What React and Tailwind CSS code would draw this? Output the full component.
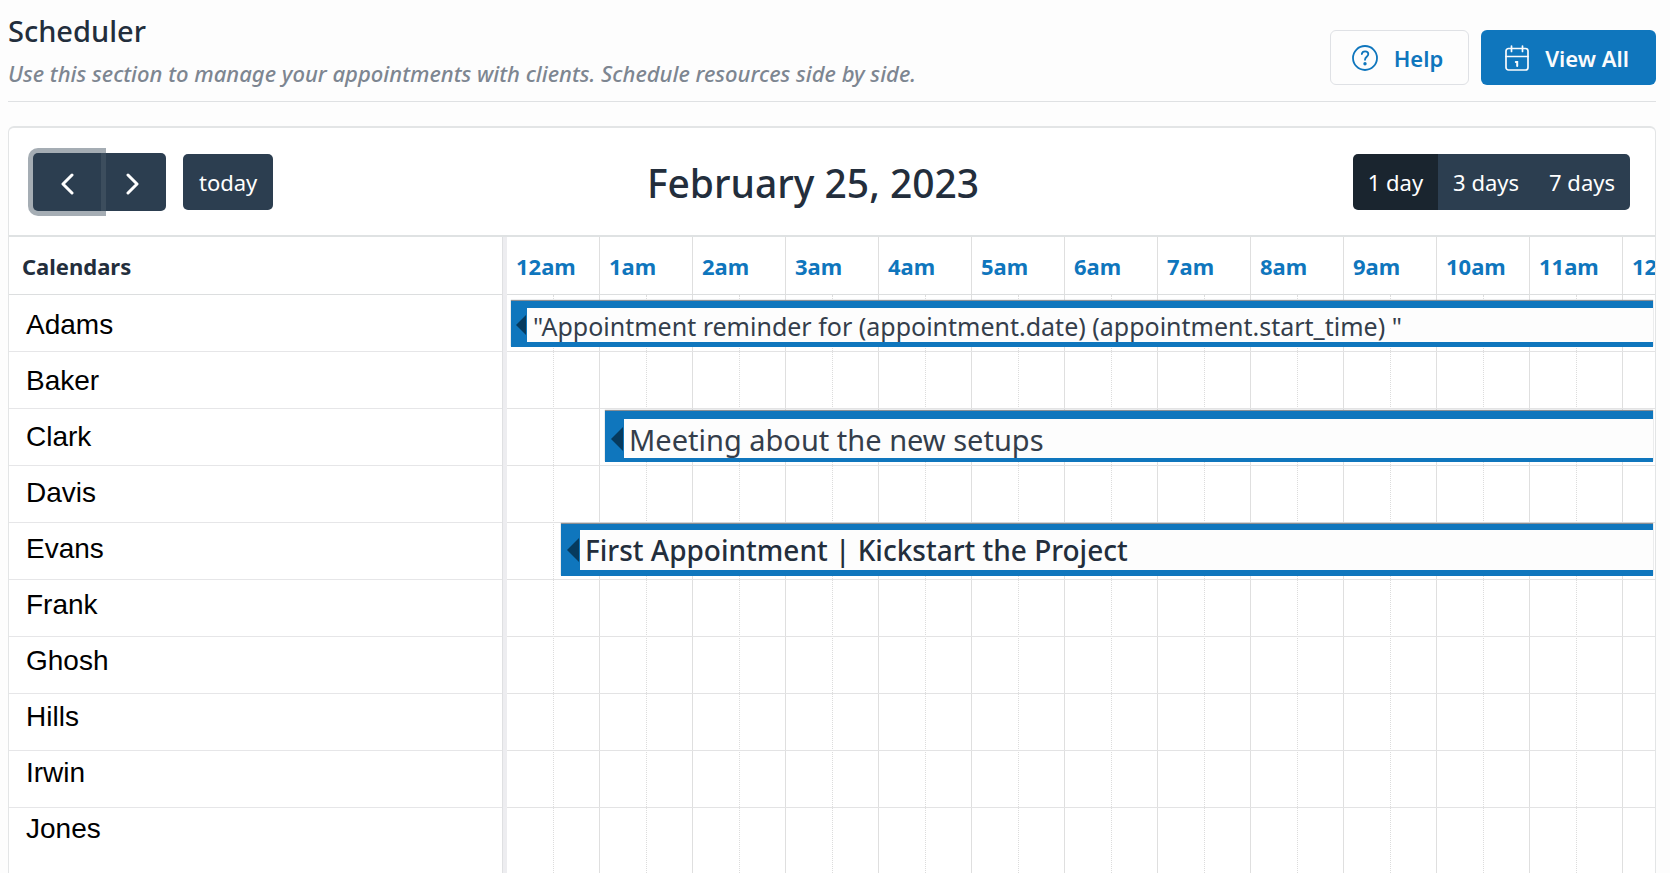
import { useState } from "react";

const CALENDARS = ["Adams", "Baker", "Clark", "Davis", "Evans", "Frank", "Ghosh", "Hills", "Irwin", "Jones"];
const HOURS = ["12am", "1am", "2am", "3am", "4am", "5am", "6am", "7am", "8am", "9am", "10am", "11am", "12pm"];
const VIEWS = ["1 day", "3 days", "7 days"];

const EVENTS = {
  Adams: {
    title: '"Appointment reminder for (appointment.date) (appointment.start_time) "',
    box: "mt-[6px] ml-[4px] h-[46px] pt-[7px] pb-[5px]",
    strip: "w-[16px]",
    arrow: "h-5 w-[10px]",
    text: "pt-[2px] pl-[6px] text-[25px] text-[#343e4b]",
  },
  Clark: {
    title: "Meeting about the new setups",
    box: "mt-[2px] ml-[98px] h-[51px] pt-[8px] pb-[4px]",
    strip: "w-[19px]",
    arrow: "h-6 w-[12px]",
    text: "pt-[2px] pl-[5px] text-[29px] text-[#343e4b]",
  },
  Evans: {
    title: "First Appointment | Kickstart the Project",
    box: "mt-[1px] ml-[54px] h-[52px] pt-[6px] pb-[6px]",
    strip: "w-[19px]",
    arrow: "h-6 w-[12px]",
    text: "pl-[5px] text-[28px] font-medium text-[#232e3c]",
  },
};

function HelpIcon() {
  return (
    <svg viewBox="0 0 26 26" className="size-[26px]" fill="none" stroke="currentColor" strokeWidth="1.8" strokeLinecap="round" aria-hidden="true">
      <circle cx="13" cy="13" r="12" />
      <path d="M9.8 9c.3-1.8 1.6-2.7 3.3-2.7 1.9 0 3.2 1.1 3.2 2.800 0 2.700-3.300 2.700-3.300 5.700" />
      <circle cx="13" cy="18.8" r="0.8" fill="currentColor" />
    </svg>
  );
}

function CalendarIcon() {
  return (
    <svg viewBox="0 0 24 26" className="h-[26px] w-6" fill="none" stroke="currentColor" strokeWidth="1.7" strokeLinecap="round" aria-hidden="true">
      <rect x="1" y="3.5" width="22" height="21.5" rx="2.5" />
      <path d="M1 11.5h22M6.5 1v5.5M17.5 1v5.5" />
      <path d="M10.8 17h1.4v4" strokeWidth="2" />
    </svg>
  );
}

function Chevron({ d }) {
  return (
    <svg viewBox="0 0 14 22" className="h-[22px] w-[14px]" fill="none" stroke="currentColor" strokeWidth="3" strokeLinecap="round" strokeLinejoin="round" aria-hidden="true">
      <path d={d} />
    </svg>
  );
}

function Event({ event }) {
  return (
    <a href="#event" className={`relative mr-[2px] flex bg-[#0f76bd] shadow-[0_-1px_1px_#8b8f94] ${event.box}`}>
      <span className={`flex shrink-0 items-center justify-end pr-px ${event.strip}`}>
        <svg viewBox="0 0 10 20" preserveAspectRatio="none" className={event.arrow} aria-hidden="true">
          <path d="M10 0v20L0 10z" fill="#063a5e" />
        </svg>
      </span>
      <span className={`flex min-w-0 flex-1 items-center whitespace-nowrap bg-[#fdfdfd] leading-none ${event.text}`}>
        {event.title}
      </span>
    </a>
  );
}

function GridLines() {
  return (
    <div className="absolute inset-0 flex" aria-hidden="true">
      {HOURS.map((hour) => (
        <div key={hour} className="flex w-[93px] shrink-0 border-r border-[#dfdfdf]">
          <div className="w-[47px] border-r border-dotted border-[#dcdcdc]" />
        </div>
      ))}
    </div>
  );
}

function Toolbar() {
  const [view, setView] = useState("1 day");
  return (
    <div className="flex h-[109px] items-center justify-between border-b-2 border-[#dfe2e3] pr-[25px] pl-6">
      <div className="flex items-center">
        <div className="flex h-[58px] text-white">
          <button type="button" aria-label="Previous" className="relative flex w-[68px] items-center justify-center rounded-l-[5px] bg-[#2c3e50] pt-1 shadow-[0_0_0_5px_rgba(76,91,106,0.5)]">
            <Chevron d="M12 2L3 11l9 9" />
          </button>
          <button type="button" aria-label="Next" className="flex w-[65px] items-center justify-center rounded-r-[5px] bg-[#2c3e50] pt-1 pr-[2px]">
            <Chevron d="M2 2l9 9-9 9" />
          </button>
        </div>
        <button type="button" className="ml-[17px] h-14 rounded-[5px] bg-[#2c3e50] px-4 pt-[2px] text-[22px] text-white">today</button>
      </div>
      <h2 className="pt-1 text-[39px] font-medium text-[#232e3c]">February 25, 2023</h2>
      <div className="flex h-14 overflow-hidden rounded-[5px] text-[22px] text-white">
        {VIEWS.map((v) => (
          <button
            key={v}
            type="button"
            aria-pressed={view === v}
            onClick={() => setView(v)}
            className={`px-[15px] pt-[2px] ${view === v ? "bg-[#1a252f]" : "bg-[#2c3e50]"}`}
          >
            {v}
          </button>
        ))}
      </div>
    </div>
  );
}

export default function App() {
  return (
    <div className="min-h-screen bg-white font-['Noto_Sans','Open_Sans',sans-serif] text-[#232e3c]">
      <main className="overflow-hidden bg-[#fdfdfd] pr-[14px] pl-2">
        <header className="flex h-[102px] items-start justify-between border-b border-[#dfe1e3]">
          <div>
            <h1 className="mt-[11px] text-[29px] leading-10 font-medium">Scheduler</h1>
            <p className="mt-1 text-[22px] leading-9 font-medium text-[#7d8691] italic">
              Use this section to manage your appointments with clients. Schedule resources side by side.
            </p>
          </div>
          <div className="mt-[30px] flex gap-3 text-[22px] font-semibold">
            <button type="button" className="flex h-[55px] items-center gap-4 rounded-[6px] border border-[#dfe1e5] bg-[#fdfdfd] pr-[25px] pl-[21px] text-[#0f76bd]">
              <HelpIcon />
              <span className="pt-[2px]">Help</span>
            </button>
            <button type="button" className="flex h-[55px] items-center gap-4 rounded-[6px] bg-[#0f76bd] pr-[27px] pl-6 text-[#fafbfc]">
              <CalendarIcon />
              <span className="pt-[2px]">View All</span>
            </button>
          </div>
        </header>

        <section className="mt-6 overflow-hidden rounded-t-[6px] border-x border-t-2 border-[#e3e5e6] bg-white">
          <Toolbar />
          <div className="flex">
            <div className="w-[493px] shrink-0">
              <div className="flex h-[58px] items-center border-b border-[#dcdedf] pt-[2px] pl-[13px] text-[22px] font-bold">Calendars</div>
              <div className="relative h-[578px]">
                <div className="absolute inset-0" aria-hidden="true">
                  {CALENDARS.slice(1).map((name) => (
                    <div key={name} className="h-[57px] border-b border-[#e6e6e8]" />
                  ))}
                </div>
                <ul className="relative pt-[2px] pl-[17px] font-['Liberation_Sans',Arial,sans-serif] text-[28px] text-black">
                  {CALENDARS.map((name) => (
                    <li key={name} className="flex h-14 items-center">{name}</li>
                  ))}
                </ul>
              </div>
            </div>
            <div className="w-[5px] shrink-0 border-l border-[#dfe0e2] bg-[#ededf0]" />
            <div className="min-w-0 flex-1 overflow-hidden">
              <div className="flex h-[58px] border-b border-[#dcdedf]">
                {HOURS.map((hour) => (
                  <a key={hour} href={`#${hour}`} className="flex w-[93px] shrink-0 items-center border-r border-[#dfdfdf] pt-[2px] pl-[9px] text-[22px] font-bold text-[#0f76bd]">
                    {hour}
                  </a>
                ))}
              </div>
              <div className="relative h-[578px] overflow-hidden">
                <GridLines />
                {CALENDARS.map((name, i) => (
                  <div key={name} className={`relative flow-root h-[57px] ${i < CALENDARS.length - 1 ? "border-b border-[#e3e3e4]" : ""}`}>
                    {EVENTS[name] && <Event event={EVENTS[name]} />}
                  </div>
                ))}
              </div>
            </div>
          </div>
        </section>
      </main>
    </div>
  );
}
